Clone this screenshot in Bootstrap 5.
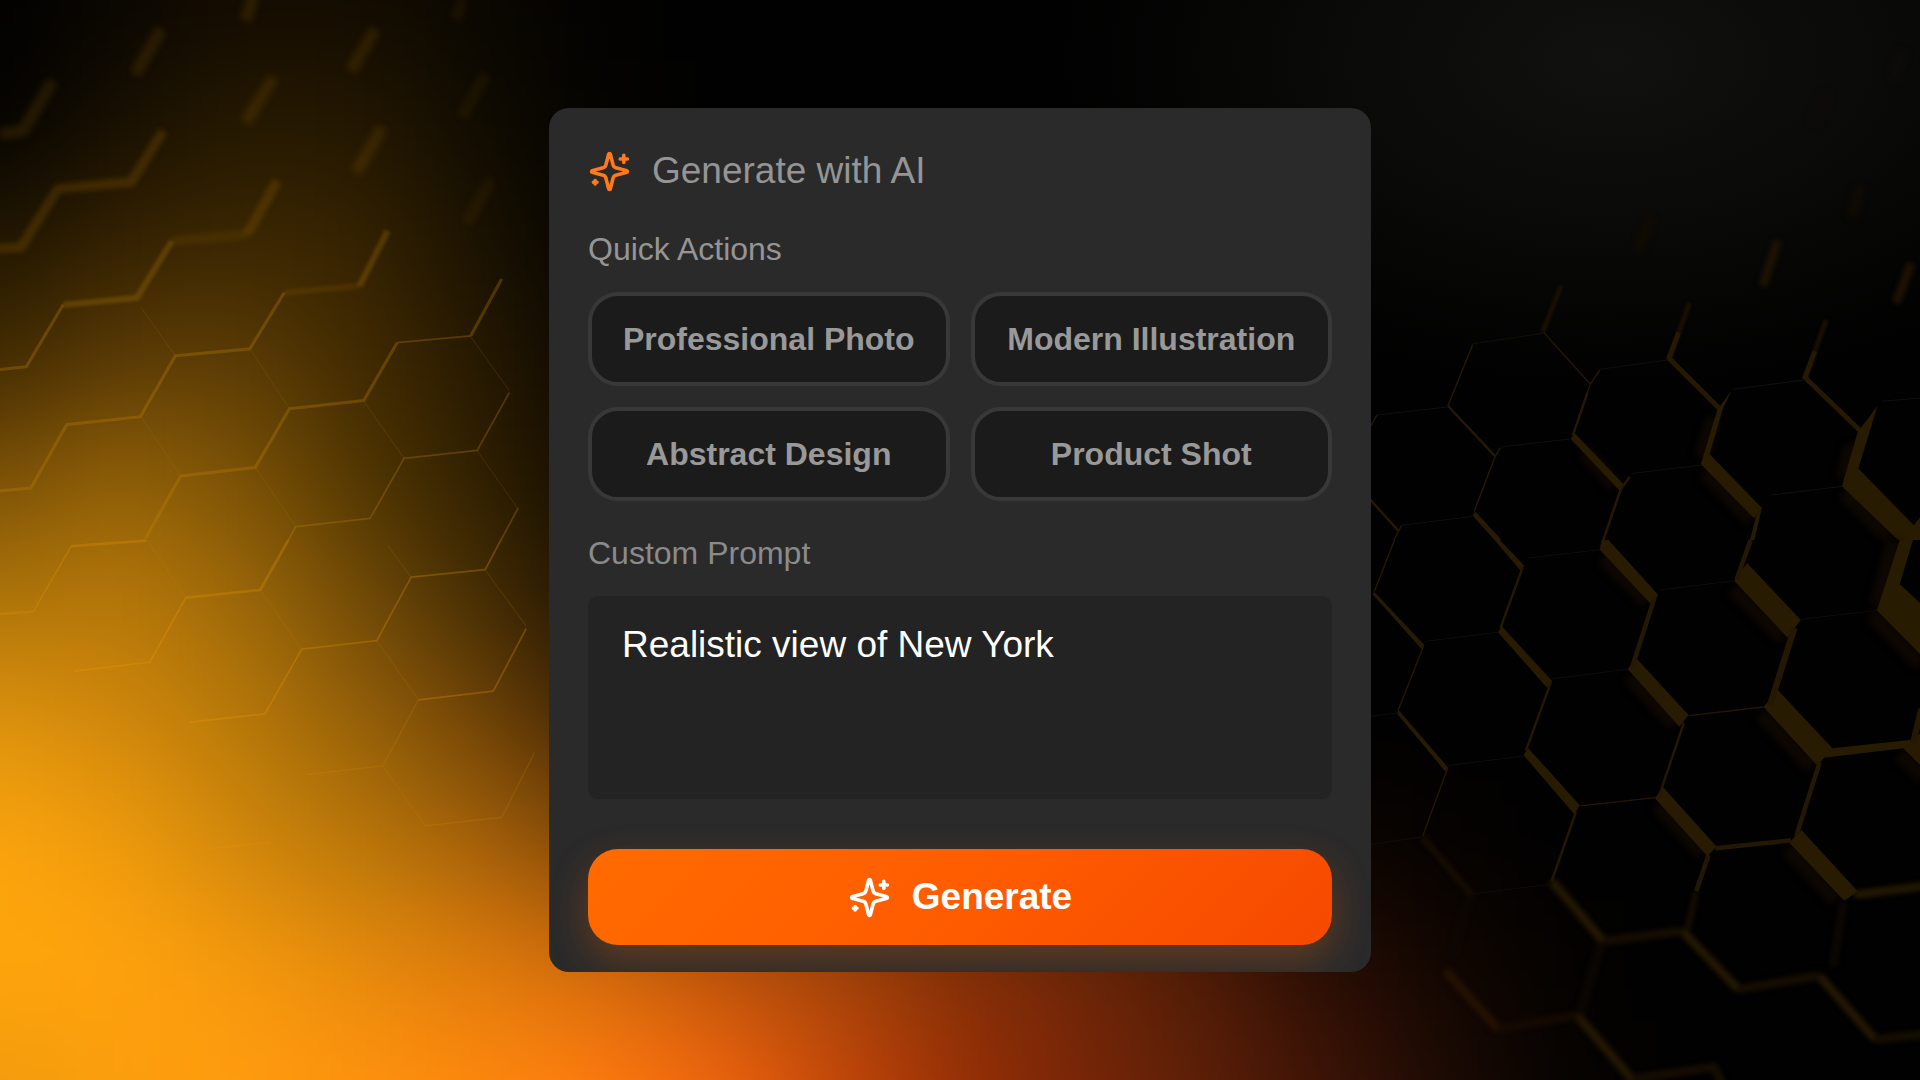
<!DOCTYPE html>
<html lang="en">
<head>
<meta charset="utf-8">
<meta name="viewport" content="width=device-width, initial-scale=1">
<title>Generate with AI</title>
<link href="https://cdn.jsdelivr.net/npm/bootstrap@5.3.0/dist/css/bootstrap.min.css" rel="stylesheet">
<style>
  body {
    background: #000;
    color: #959595;
    font-family: "Liberation Sans", Arial, sans-serif;
    font-size: 32px;
    line-height: 48px;
  }
  .backdrop { z-index: -1; }
  .ai-panel {
    width: 100%;
    max-width: 822px;
    padding: 39px 39px 27px;
    background: #2a2a2a;
    border-radius: 20px;
  }
  .ai-title {
    gap: 21px;
    margin-bottom: 30px;
    font-size: 37px;
    line-height: 48px;
    font-weight: 400;
  }
  .ai-title svg { color: #ff7a1c; }
  .spark { width: 43px; height: 43px; flex: none; }
  .quick-title {
    margin-bottom: 19px;
    font-size: 32px;
    line-height: 48px;
    font-weight: 400;
  }
  .quick-grid {
    display: grid;
    grid-template-columns: repeat(auto-fit, minmax(320px, 1fr));
    gap: 21px;
    margin-bottom: 28px;
  }
  .btn-quick {
    --bs-btn-color: #999;
    --bs-btn-bg: #1b1b1b;
    --bs-btn-border-color: #383838;
    --bs-btn-border-width: 4px;
    --bs-btn-border-radius: 30px;
    --bs-btn-padding-y: 19px;
    --bs-btn-padding-x: 12px;
    --bs-btn-font-size: 32px;
    --bs-btn-line-height: 48px;
    --bs-btn-font-weight: 700;
    --bs-btn-hover-color: #ccc;
    --bs-btn-hover-bg: #222;
    --bs-btn-hover-border-color: #555;
  }
  .prompt-label { margin-bottom: 19px; color: #8b8b8b; }
  .prompt-box, .prompt-box:focus {
    height: 203px;
    padding: 21px 34px;
    background: #232323;
    color: #fff;
    border: 0;
    border-radius: 10px;
    font-size: 37px;
    line-height: 56px;
    resize: none;
    box-shadow: none;
  }
  .btn-generate, .btn-generate:hover {
    gap: 21px;
    height: 96px;
    margin-top: 50px;
    border: 0;
    border-radius: 30px;
    background: linear-gradient(135deg, #ff6b00, #ff5c00 50%, #f54900);
    color: #fff;
    font-size: 37px;
    font-weight: 700;
    box-shadow: 0 15px 38px rgba(255, 107, 0, .27);
  }
</style>
</head>
<body>
<svg class="backdrop position-fixed top-0 start-0 w-100 h-100" viewBox="0 0 1920 1080" preserveAspectRatio="xMidYMid slice" aria-hidden="true">
  <defs>
    <filter id="melt" filterUnits="userSpaceOnUse" x="-400" y="-400" width="2720" height="1880" color-interpolation-filters="sRGB"><feGaussianBlur stdDeviation="54"/></filter>
    <filter id="b12" x="-20%" y="-20%" width="140%" height="140%" color-interpolation-filters="sRGB"><feGaussianBlur stdDeviation="11"/></filter>
    <filter id="b6" x="-20%" y="-20%" width="140%" height="140%" color-interpolation-filters="sRGB"><feGaussianBlur stdDeviation="7"/></filter>
    <filter id="b3" x="-20%" y="-20%" width="140%" height="140%" color-interpolation-filters="sRGB"><feGaussianBlur stdDeviation="4"/></filter>
    <radialGradient id="haze"><stop offset="0" stop-color="#11110f"/><stop offset=".5" stop-color="#0c0c0a" stop-opacity=".8"/><stop offset="1" stop-color="#0a0a08" stop-opacity="0"/></radialGradient>
  </defs>
  <rect width="1920" height="1080" fill="#010101"/>
  <ellipse cx="1610" cy="60" rx="560" ry="330" fill="url(#haze)"/>
  <g id="glow" filter="url(#melt)" style="mix-blend-mode:screen"></g>

  <!-- honeycomb seams, upper left -->
  <g transform="scale(.3508 .3444)" fill="none" stroke="#c58608" stroke-linejoin="round">
    <g filter="url(#b12)" stroke-width="34" stroke-opacity=".14">
      <path d="M150 235 65 380 0 390M460 85 385 215M725-20 700 60M1070 85 1000 205M780 225 700 355M1090 370 1015 500"/>
      <path stroke-opacity=".07" d="M1320-10 1300 60M1385 215 1315 340M1400 520 1330 650"/>
    </g>
    <g filter="url(#b6)" stroke-width="28" stroke-opacity=".18">
      <path d="M-20 722 60 718 165 548 375 528 465 380M790 525 705 680"/>
      <path stroke-opacity=".1" d="M705 680 490 700"/>
    </g>
    <g filter="url(#b3)" stroke-width="18" stroke-opacity=".25">
      <path d="M490 700 390 865 180 885M1105 670 1025 830"/>
      <path stroke-opacity=".12" d="M1025 830 810 850"/>
    </g>
    <g stroke-width="9" stroke-opacity=".3">
      <path d="M180 885 75 1065-20 1075M810 850 712 1013 500 1033 400 1210 190 1233 88 1417-20 1427M1430 810 1342 975M1132 995 1037 1163 825 1187 728 1357 515 1382 415 1563"/>
      <path stroke-width="5" d="M1342 975 1132 995M1452 1140 1360 1308 1152 1331 1055 1505 843 1529 822 1568M1477 1475 1428 1568"/>
    </g>
    <path stroke-width="3" stroke-opacity=".14" d="M400 890 500 1033M715 1017 825 1187M1037 1165 1152 1331M1340 975 1452 1135M402 1210 515 1382M728 1357 843 1529M1360 1308 1475 1475"/>
  </g>

  <!-- honeycomb seams, lower left -->
  <g transform="translate(0 540) scale(.3508 .3444)" fill="none" stroke="#d98f0a" stroke-linejoin="round">
    <path stroke-width="8" stroke-opacity=".32" d="M417 2 203 18M95 208-20 217M822 0 742 145 530 167"/>
    <path stroke-width="5" stroke-opacity=".32" d="M203 18 95 208M1428 0 1383 86 1172 108 1074 292 860 317M1500 257 1406 439"/>
    <g stroke="#f59a10" stroke-width="5" stroke-opacity=".28">
      <path d="M530 167 427 355 210 381M860 317 755 505 542 529M1406 439 1193 464"/>
      <path stroke-width="4" stroke-opacity=".15" d="M1193 464 1091 656 875 681M1524 617 1430 805 1212 830M773 877 565 901M437 728 225 750M-10 587 100 577"/>
    </g>
    <path stroke-width="3" stroke-opacity=".15" d="M420 1 530 167M1105 15 1172 108M1385 90 1500 250M427 355 540 529M745 150 860 317M1074 292 1193 464M1091 656 1212 830"/>
  </g>

  <!-- honeycomb seams, upper right -->
  <g transform="translate(1370 0) scale(.3508 .3444)" fill="none" stroke="#261901">
    <path filter="url(#b12)" stroke="#0e0701" stroke-width="44" d="M610 1310 700 1410M955 1370 1090 1510M1350 1430 1480 1560M1375 1290 1350 1390M980 1215 945 1330"/>
    <g stroke-width="24">
      <path filter="url(#b12)" stroke="#120b02" d="M1400 540 1375 630M800 630 765 730"/>
      <path filter="url(#b12)" stroke="#0f0c08" d="M1300 270 1265 360M1520 150 1490 230"/>
      <path filter="url(#b6)" stroke="#1f1302" d="M1162 700 1120 830M1543 765 1500 880"/>
    </g>
    <path filter="url(#b3)" stroke="#1d1202" stroke-width="12" d="M545 830 492 965M910 880 855 1040M1300 930 1242 1095"/>
    <path stroke-width="14" d="M880 965 852 1040 1000 1190M1268 1020 1240 1096 1397 1250"/>
    <path stroke-width="4" d="M293 1000 222 1178M495 965 628 1115M655 1075 628 1115 578 1265"/>
    <path stroke-width="7" d="M222 1178 357 1325M620 1140 578 1265M740 1385 715 1420 665 1568M0 1450 80 1540M1568 1515 1552 1568"/>
    <path stroke-width="4" d="M372 1300 357 1325 297 1485M90 1525 68 1568M20 1205 0 1240"/>
    <path fill="#271c02" stroke="none" d="M583 1257 722 1405 712 1425 572 1275ZM968 1318 1117 1475 1095 1505 943 1348ZM1392 1360 1550 1525 1570 1500V1568H1505L1345 1412ZM1030 1135 1005 1190 968 1318 943 1348 990 1190ZM1447 1178 1392 1360 1345 1412 1390 1255ZM300 1485 375 1568H355L292 1497ZM1135 1445 1117 1475 1096 1568H1083L1100 1500Z"/>
    <path stroke="#0f0f0f" stroke-width="3" d="M293 998 492 968M655 1072 850 1045M20 1205 220 1182M372 1298 570 1275M745 1375 945 1350M1035 1130 1240 1103M1145 1437 1350 1412M1460 1165 1575 1155M90 1525 290 1500"/>
  </g>

  <!-- honeycomb seams, lower right -->
  <g transform="translate(1370 540) scale(.3508 .3444)" fill="none" stroke="#241802">
    <path filter="url(#b12)" stroke="#0e0701" stroke-width="44" d="M665 50 790 180M1035 140 1180 285M1430 215 1570 360M740 395 870 535M1115 505 1260 660M820 770 950 910M1190 895 1330 1045M1495 0 1445 190M1510 620 1580 690"/>
    <path fill="#271c02" stroke="none" d="M355 0H370L440 75 430 90ZM660 0H680L822 160 800 185 655 28ZM1075 67 1228 232 1190 283 1038 118ZM1510 128 1572 187V335L1445 205ZM375 250 520 410 505 430 365 268ZM758 342 908 508 882 542 735 375ZM1162 435 1318 605 1275 655 1122 485ZM12 150 155 305 148 318 8 158ZM80 492 222 660 215 672 78 505ZM450 603 598 770 583 797 438 625ZM835 717 988 890 962 918 812 750ZM1230 842 1390 1020 1352 1048 1195 878ZM1318 605 1545 580 1570 560V655L1520 605 1295 632ZM1510 0H1548L1510 128 1445 205Z"/>
    <path stroke-width="4" d="M70 0 12 150M152 310 80 495M222 660 150 860M908 510 1122 485M598 772 812 748"/>
    <path stroke-width="7" d="M435 80 372 255M515 415 445 610M587 790 518 990M895 530 825 740"/>
    <path stroke-width="13" d="M812 165 747 370M1085 0 1045 115M965 915 930 1020M1282 645 1215 860M985 895 1200 872"/>
    <path stroke-width="18" d="M1210 255 1140 480M1572 490 1548 590"/>
    <g filter="url(#b6)" stroke-width="24">
      <path d="M518 990 665 1165M890 1135 1050 1305M1280 1265 1440 1450M590 1380 750 1570M1380 1030 1580 1005"/>
      <path stroke-width="14" stroke="#1a1002" d="M148 862 290 1030M930 1020 905 1130"/>
      <path stroke="#170e02" d="M665 1165 890 1135M1050 1305 1280 1265M1440 1450 1580 1435M750 1565 980 1530 1010 1590"/>
      <path stroke="#251202" d="M215 1250 365 1420"/>
      <path stroke="#0d0702" d="M285 1035 230 1220M660 1170 600 1370M1350 1050 1320 1240"/>
      <path stroke="#160a03" d="M365 1420 590 1380"/>
    </g>
    <path stroke="#0d0d0c" stroke-width="3" d="M450 52 655 28M830 145 1038 118M155 295 365 268M520 403 735 375M1228 230 1445 205M222 655 438 627M0 512 78 502M0 885 148 862M295 1027 510 1000"/>
  </g>
</svg>

<svg class="d-none" aria-hidden="true">
  <symbol id="sparkles" viewBox="0 0 24 24" fill="none" stroke="currentColor" stroke-width="2" stroke-linecap="round" stroke-linejoin="round">
    <path d="M9.937 15.5A2 2 0 0 0 8.5 14.063l-6.135-1.582a.5.5 0 0 1 0-.962L8.5 9.936A2 2 0 0 0 9.937 8.5l1.582-6.135a.5.5 0 0 1 .963 0L14.063 8.5A2 2 0 0 0 15.5 9.937l6.135 1.581a.5.5 0 0 1 0 .964L15.5 14.063a2 2 0 0 0-1.437 1.437l-1.582 6.135a.5.5 0 0 1-.963 0zM20 3v4M22 5h-4M4 17v2M5 18H3"/>
  </symbol>
</svg>

<main class="min-vh-100 d-flex align-items-center justify-content-center">
  <form class="ai-panel overflow-hidden" onsubmit="return false">
    <h1 class="ai-title d-flex align-items-center">
      <svg class="spark" aria-hidden="true"><use href="#sparkles"/></svg>
      Generate with AI
    </h1>
    <h2 class="quick-title">Quick Actions</h2>
    <div class="quick-grid">
      <button type="button" class="btn btn-quick text-nowrap">Professional Photo</button>
      <button type="button" class="btn btn-quick text-nowrap">Modern Illustration</button>
      <button type="button" class="btn btn-quick text-nowrap">Abstract Design</button>
      <button type="button" class="btn btn-quick text-nowrap">Product Shot</button>
    </div>
    <label class="prompt-label d-block" for="prompt">Custom Prompt</label>
    <textarea class="form-control prompt-box" id="prompt" spellcheck="false">Realistic view of New York</textarea>
    <button type="submit" class="btn btn-generate w-100 d-flex align-items-center justify-content-center">
      <svg class="spark" aria-hidden="true"><use href="#sparkles"/></svg>
      Generate
    </button>
  </form>
</main>

<script src="https://cdn.jsdelivr.net/npm/bootstrap@5.3.0/dist/js/bootstrap.bundle.min.js"></script>
<script>
  // Colour mesh of the amber glow: one swatch per 120 units, melted together by the blur filter.
  const mesh = [
    '000000 080500 120a00 120a00 080600 020100',
    '020100 160e00 241800 221600 0f0a00 030200',
    '1e1400 332000 3a2500 352200 181000 040300',
    '402900 5a3a04 5c3c04 402900 261800 080500',
    '7a5006 926006 7c5205 503500 2e1e00 100a00',
    'ad7308 b87708 9e6808 704a06 442c03 1c1100',
    'de930c d0870a b87808 965f07 704306 3c2204 201004',
    'fba40c ef9b0b cf870a b87508 a45f08 7a4406 603008 4a2405 3a1604 2a0e03 180802 0a0300 040100',
    'ffa50a ffa20c f5980c e48b0b dc780a d0680a b85008 a04208 842f06 6a2606 4e1b05 280c03 100500 030100',
    'f09b0c fc9e0c ff9c0d ff920d ff880c ff7a0e f0640d c44608 982e05 782406 5c1e06 3e1305 1c0a03 060200'
  ].map(r => r.split(' '));
  const glow = document.getElementById('glow');
  mesh.forEach((row, j) => row.forEach((c, i) => {
    const r = document.createElementNS('http://www.w3.org/2000/svg', 'rect');
    const left = i ? i * 120 - 60 : -360, top = j ? j * 120 - 60 : -360;
    const right = i * 120 + 61, bottom = j === mesh.length - 1 ? 1440 : j * 120 + 61;
    r.setAttribute('x', left);
    r.setAttribute('y', top);
    r.setAttribute('width', right - left);
    r.setAttribute('height', bottom - top);
    r.setAttribute('fill', '#' + c);
    glow.appendChild(r);
  }));
</script>
</body>
</html>
